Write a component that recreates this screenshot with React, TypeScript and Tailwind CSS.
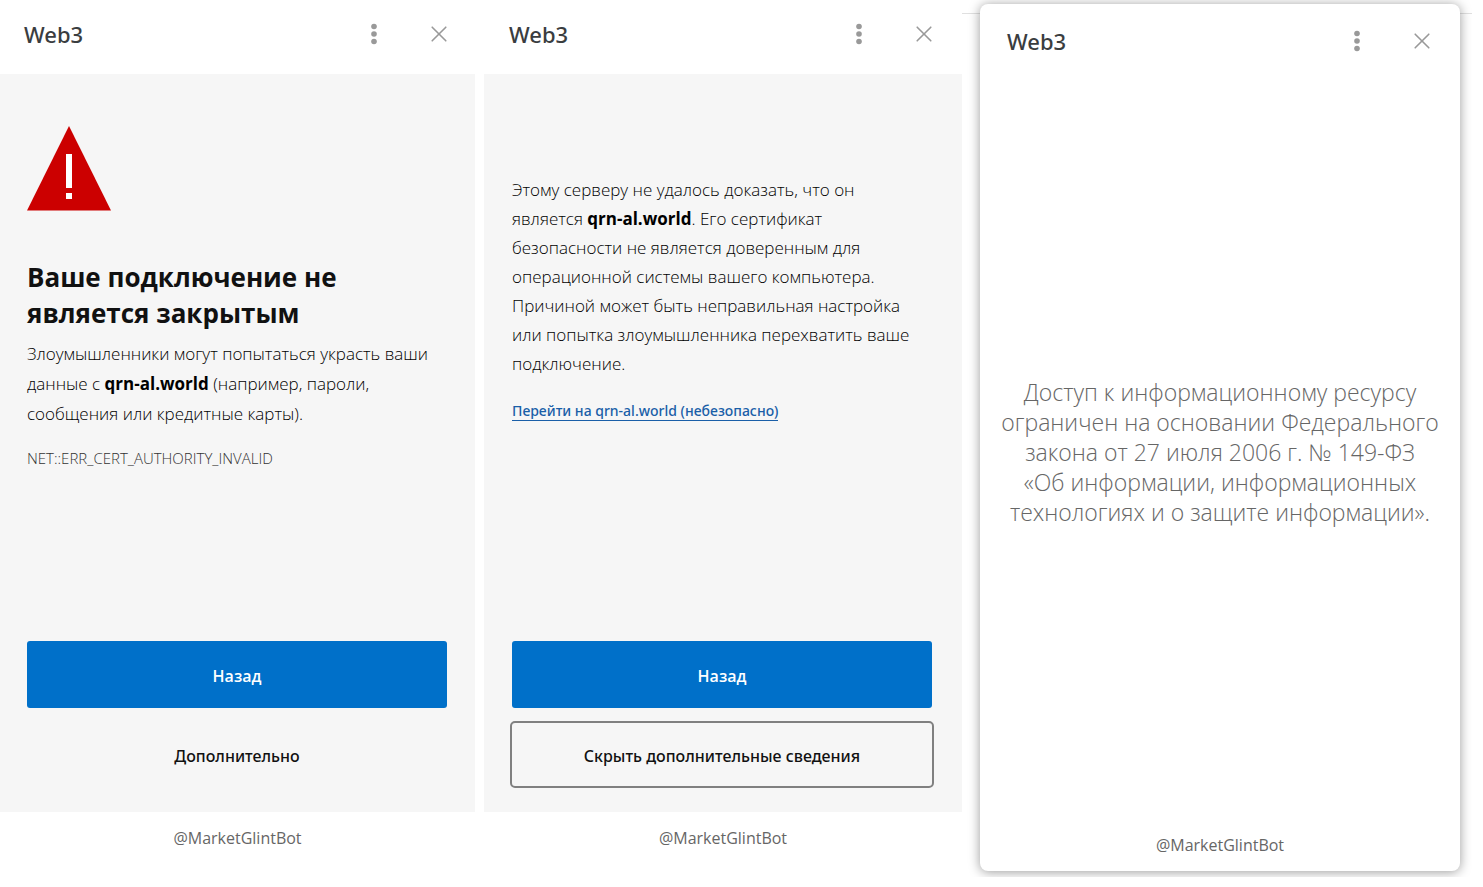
import React, { ReactNode } from "react";

interface WindowHeaderProps {
    title: string;
    className?: string;
}

function WindowHeader({ title, className = "" }: WindowHeaderProps) {
    return (
        <header className={`flex h-[68px] shrink-0 items-center ${className}`}>
            <h1 className="flex-1 font-['Noto_Sans','Open_Sans',sans-serif] text-[22px] leading-7 font-medium text-[#3a3d3f]">{title}</h1>
            <button type="button" aria-label="Меню" className="mr-[41px] flex h-6 w-6 cursor-pointer items-center justify-center text-[#999999]">
                <svg width="6" height="22" viewBox="0 0 6 22" fill="currentColor">
                    <circle cx="3" cy="3.5" r="2.8" />
                    <circle cx="3" cy="11" r="2.8" />
                    <circle cx="3" cy="18.5" r="2.8" />
                </svg>
            </button>
            <button type="button" aria-label="Закрыть" className="flex h-6 w-6 cursor-pointer items-center justify-center text-[#999999]">
                <svg width="16" height="16" viewBox="0 0 16 16" fill="none" stroke="currentColor" strokeWidth="1.6" strokeLinecap="round">
                    <path d="M1.2 1.2 14.8 14.8M14.8 1.2 1.2 14.8" />
                </svg>
            </button>
        </header>
    );
}

function WindowFooter() {
    return (
        <footer className="flex h-[52px] shrink-0 items-center justify-center text-base text-[#666666]">@MarketGlintBot</footer>
    );
}

function WarningIcon() {
    return (
        <svg width="84" height="85" viewBox="0 0 84 85" aria-hidden="true">
            <path d="M42 0 84 84.4H0z" fill="#cc0000" />
            <path d="M39 28h6v34h-6zM39 67h6v6h-6z" fill="#ffffff" />
        </svg>
    );
}

interface WarningBodyProps {
    children: ReactNode;
    action: ReactNode;
    className?: string;
}

function WarningBody({ children, action, className = "" }: WarningBodyProps) {
    return (
        <main className={`mt-1.5 flex flex-1 flex-col bg-[#f6f6f6] pb-6 text-[#111111] ${className}`}>
            <div className="flex-1">{children}</div>
            <button type="button" className="h-[67px] cursor-pointer rounded-[3px] bg-[#0070c9] pt-0.5 text-base font-semibold text-white">
                Назад
            </button>
            {action}
        </main>
    );
}

export default function App() {
    return (
        <div className="grid min-h-screen grid-cols-[475fr_487fr_521fr] bg-white font-['Open_Sans',sans-serif]">
            <section className="mb-[23px] flex flex-col">
                <WindowHeader title="Web3" className="pr-6 pl-6" />
                <WarningBody
                    className="pr-7 pl-[27px]"
                    action={
                        <button type="button" className="mt-[13px] h-[67px] cursor-pointer pt-0.5 font-['Noto_Sans','Open_Sans',sans-serif] text-base font-medium">
                            Дополнительно
                        </button>
                    }
                >
                    <div className="pt-[52px]">
                        <WarningIcon />
                    </div>
                    <h2 className="mt-12 text-[26px] leading-9 font-bold">
                        Ваше подключение не
                        <br />
                        является закрытым
                    </h2>
                    <p className="mt-2 text-[17px] leading-[30px] font-light whitespace-nowrap text-black">
                        Злоумышленники могут попытаться украсть ваши
                        <br />
                        данные с <strong className="font-bold">qrn-al.world</strong> (например, пароли,
                        <br />
                        сообщения или кредитные карты).
                    </p>
                    <p className="mt-[17px] text-[15px] leading-6 font-light text-[#333333]">NET::ERR_CERT_AUTHORITY_INVALID</p>
                </WarningBody>
                <WindowFooter />
            </section>

            <section className="mb-[23px] ml-[9px] flex flex-col">
                <WindowHeader title="Web3" className="pr-[26px] pl-[25px]" />
                <WarningBody
                    className="pr-[30px] pl-7"
                    action={
                        <button type="button" className="-mx-0.5 mt-[13px] h-[67px] cursor-pointer rounded-[5px] border-2 border-[#808080] pt-0.5 font-['Noto_Sans','Open_Sans',sans-serif] text-base font-medium">
                            Скрыть дополнительные сведения
                        </button>
                    }
                >
                    <p className="pt-[101px] text-[17px] leading-[29px] font-light whitespace-nowrap text-black">
                        Этому серверу не удалось доказать, что он
                        <br />
                        является <strong className="font-bold">qrn-al.world</strong>. Его сертификат
                        <br />
                        безопасности не является доверенным для
                        <br />
                        операционной системы вашего компьютера.
                        <br />
                        Причиной может быть неправильная настройка
                        <br />
                        или попытка злоумышленника перехватить ваше
                        <br />
                        подключение.
                    </p>
                    <a href="#proceed" className="mt-6 inline-block border-b border-[#1a5fa8] font-['Noto_Sans','Open_Sans',sans-serif] text-sm leading-[18px] font-medium text-[#1a5fa8]">
                        Перейти на qrn-al.world (небезопасно)
                    </a>
                </WarningBody>
                <WindowFooter />
            </section>

            {/* blocked page window, floats above the edge of the page behind it */}
            <div className="mr-[11px] mb-[10px] flex flex-col overflow-hidden bg-[linear-gradient(#e0e0e0,#e0e0e0)] bg-[length:100%_1px] bg-[position:0_13px] bg-no-repeat pt-1 pr-3 pb-1.5 pl-[18px]">
                <section className="flex flex-1 flex-col rounded-lg bg-white pt-[3px] shadow-[0_1px_12px_rgba(0,0,0,0.4)]">
                    <WindowHeader title="Web3" className="pr-[26px] pl-[27px]" />
                    <main className="flex flex-1 items-center justify-center pt-2.5">
                        <p className="text-center text-[23px] leading-[30px] font-light text-[#666666]">
                            Доступ к информационному ресурсу
                            <br />
                            ограничен на основании Федерального
                            <br />
                            закона от 27 июля 2006 г. № 149-ФЗ
                            <br />
                            «Об информации, информационных
                            <br />
                            технологиях и о защите информации».
                        </p>
                    </main>
                    <WindowFooter />
                </section>
            </div>
        </div>
    );
}
